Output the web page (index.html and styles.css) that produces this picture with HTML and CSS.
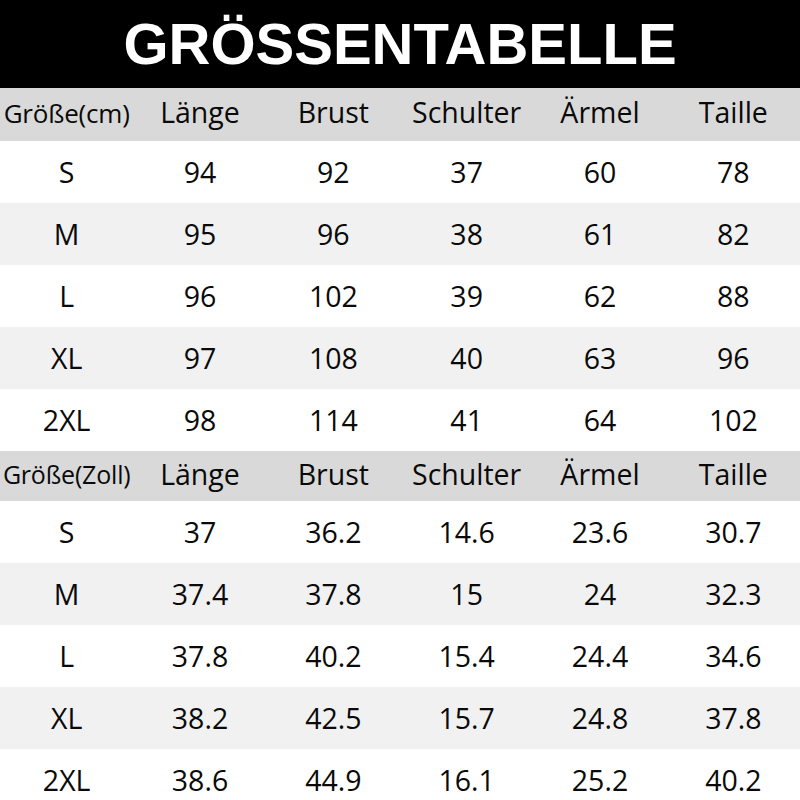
FILE: index.html
```html
<!DOCTYPE html>
<html lang="de">
<head>
<meta charset="utf-8">
<title>Größentabelle</title>
<link rel="stylesheet" href="styles.css">
</head>
<body>
<header class="banner"><h1 class="title">GRÖSSENTABELLE</h1></header>
<section class="table">
  <div class="row head"><div class="cell small">Größe(cm)</div><div class="cell">Länge</div><div class="cell">Brust</div><div class="cell">Schulter</div><div class="cell">Ärmel</div><div class="cell">Taille</div></div>
  <div class="row"><div class="cell">S</div><div class="cell">94</div><div class="cell">92</div><div class="cell">37</div><div class="cell">60</div><div class="cell">78</div></div>
  <div class="row alt"><div class="cell">M</div><div class="cell">95</div><div class="cell">96</div><div class="cell">38</div><div class="cell">61</div><div class="cell">82</div></div>
  <div class="row"><div class="cell">L</div><div class="cell">96</div><div class="cell">102</div><div class="cell">39</div><div class="cell">62</div><div class="cell">88</div></div>
  <div class="row alt"><div class="cell">XL</div><div class="cell">97</div><div class="cell">108</div><div class="cell">40</div><div class="cell">63</div><div class="cell">96</div></div>
  <div class="row"><div class="cell">2XL</div><div class="cell">98</div><div class="cell">114</div><div class="cell">41</div><div class="cell">64</div><div class="cell">102</div></div>
</section>
<section class="table">
  <div class="row head head2"><div class="cell small small2">Größe(Zoll)</div><div class="cell">Länge</div><div class="cell">Brust</div><div class="cell">Schulter</div><div class="cell">Ärmel</div><div class="cell">Taille</div></div>
  <div class="row"><div class="cell">S</div><div class="cell">37</div><div class="cell">36.2</div><div class="cell">14.6</div><div class="cell">23.6</div><div class="cell">30.7</div></div>
  <div class="row alt"><div class="cell">M</div><div class="cell">37.4</div><div class="cell">37.8</div><div class="cell">15</div><div class="cell">24</div><div class="cell">32.3</div></div>
  <div class="row"><div class="cell">L</div><div class="cell">37.8</div><div class="cell">40.2</div><div class="cell">15.4</div><div class="cell">24.4</div><div class="cell">34.6</div></div>
  <div class="row alt"><div class="cell">XL</div><div class="cell">38.2</div><div class="cell">42.5</div><div class="cell">15.7</div><div class="cell">24.8</div><div class="cell">37.8</div></div>
  <div class="row"><div class="cell">2XL</div><div class="cell">38.6</div><div class="cell">44.9</div><div class="cell">16.1</div><div class="cell">25.2</div><div class="cell">40.2</div></div>
</section>
</body>
</html>
```
FILE: styles.css
```css
html, body {
  margin: 0;
  padding: 0;
  background: #ffffff;
  overflow: hidden;
}
body {
  font-family: "Open Sans", "Noto Sans", sans-serif;
  color: #0a0a0a;
}
.banner {
  background: #000000;
  height: 88px;
  display: flex;
  align-items: center;
  justify-content: center;
}
.title {
  margin: 0;
  font-family: "Liberation Sans", Arial, sans-serif;
  font-weight: bold;
  font-size: 58px;
  color: #ffffff;
  line-height: 1;
}
.row {
  display: grid;
  grid-template-columns: repeat(6, 1fr);
  height: 62px;
  align-items: center;
}
.row.alt {
  background: #f1f1f1;
}
.row.head {
  background: #d9d9d9;
  height: 53px;
}
.row.head2 {
  height: 50px;
}
.cell {
  text-align: center;
  font-size: 28.5px;
  line-height: 1;
  white-space: nowrap;
}
.head .cell {
  padding-bottom: 4px;
}
.cell.small {
  font-size: 26px;
  letter-spacing: -0.2px;
}
.cell.small2 {
  font-size: 25px;
}
```
